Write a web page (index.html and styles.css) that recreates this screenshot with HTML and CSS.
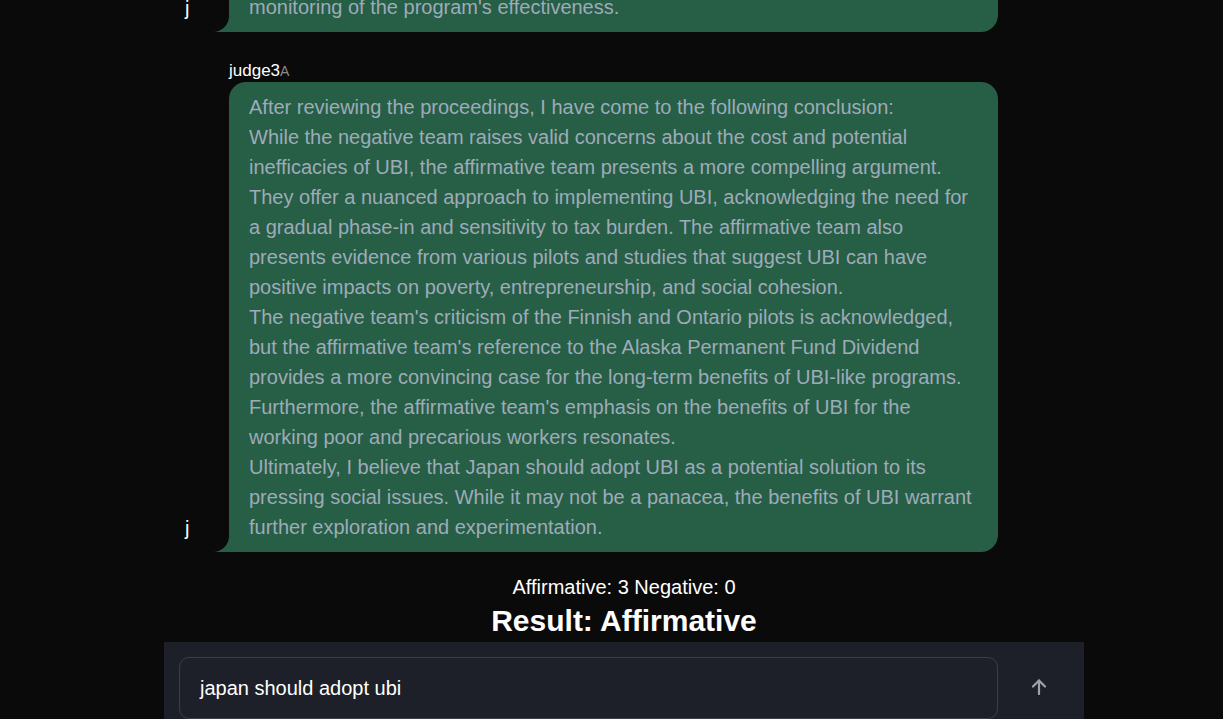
FILE: index.html
```html
<!DOCTYPE html>
<html>
<head>
<meta charset="utf-8">
<link rel="stylesheet" href="styles.css">
</head>
<body>
<div class="app">
  <div class="chat">
    <div class="msg">
      <div class="avatar">j</div>
      <div class="body">
        <div class="name">judge2<span class="tag">A</span></div>
        <div class="bubble">Overall, the affirmative team's arguments are more persuasive, and I believe that Japan should adopt a carefully designed UBI with a gradual rollout, clear funding mechanisms and continuous<br>monitoring of the program's effectiveness.</div>
      </div>
    </div>
    <div class="msg">
      <div class="avatar">j</div>
      <div class="body">
        <div class="name">judge3<span class="tag">A</span></div>
        <div class="bubble">After reviewing the proceedings, I have come to the following conclusion:<br>While the negative team raises valid concerns about the cost and potential inefficacies of UBI, the affirmative team presents a more compelling argument. They offer a nuanced approach to implementing UBI, acknowledging the need for a gradual phase-in and sensitivity to tax burden. The affirmative team also presents evidence from various pilots and studies that suggest UBI can have positive impacts on poverty, entrepreneurship, and social cohesion.<br>The negative team's criticism of the Finnish and Ontario pilots is acknowledged, but the affirmative team's reference to the Alaska Permanent Fund Dividend provides a more convincing case for the long-term benefits of UBI-like programs. Furthermore, the affirmative team's emphasis on the benefits of UBI for the working poor and precarious workers resonates.<br>Ultimately, I believe that Japan should adopt UBI as a potential solution to its pressing social issues. While it may not be a panacea, the benefits of UBI warrant further exploration and experimentation.</div>
      </div>
    </div>
    <div class="result">
      <div class="score">Affirmative: 3 Negative: 0</div>
      <h2 class="verdict">Result: Affirmative</h2>
    </div>
  </div>
  <div class="composer">
    <div class="input">japan should adopt ubi</div>
    <div class="send">
      <svg width="16" height="16" viewBox="0 0 16 16" fill="none" stroke="#9ca3af" stroke-width="2.2" stroke-linecap="round" stroke-linejoin="round"><path d="M8 15V1.5"/><path d="M2 7.5L8 1.5l6 6"/></svg>
    </div>
  </div>
</div>
</body>
</html>
```

FILE: styles.css
```css
html, body {
  margin: 0;
  height: 100%;
  background: #0a0a0a;
  font-family: "Liberation Sans", Arial, sans-serif;
  overflow: hidden;
}
body {
  padding-left: 25px;
  box-sizing: border-box;
}
.app {
  width: 920px;
  margin: 0 auto;
  height: 100vh;
  display: flex;
  flex-direction: column;
}
.chat {
  flex: 1;
  display: flex;
  flex-direction: column;
  justify-content: flex-end;
  overflow: hidden;
  padding: 0 86px 0 15px;
}
.msg {
  display: flex;
  align-items: flex-end;
  margin-top: 29px;
}
.avatar {
  width: 50px;
  flex: none;
  box-sizing: border-box;
  padding-left: 6px;
  padding-bottom: 13px;
  color: #ffffff;
  font-size: 20px;
  line-height: 22px;
}
.body {
  flex: 1;
  min-width: 0;
}
.name {
  color: #ffffff;
  font-size: 17px;
  line-height: 20px;
  margin-bottom: 1px;
}
.tag {
  color: #8a8a8a;
  font-size: 14px;
}
.bubble {
  position: relative;
  background: #275e46;
  color: #9eabb9;
  font-size: 20px;
  line-height: 30px;
  padding: 10px 20px;
  border-radius: 17px 17px 17px 0;
}
.bubble::before,
.bubble::after {
  content: "";
  position: absolute;
  left: -16px;
  bottom: 0;
  width: 16px;
  height: 16px;
}
.bubble::before { background: #275e46; }
.bubble::after {
  background: #0a0a0a;
  border-bottom-right-radius: 16px;
}
.result {
  text-align: center;
  color: #ffffff;
  margin: 23px -86px 0 -15px;
  padding-bottom: 3px;
}
.score {
  font-size: 20px;
  line-height: 24px;
}
.verdict {
  margin: 4px 0 0;
  font-size: 30px;
  line-height: 36px;
  font-weight: bold;
}
.composer {
  flex: none;
  background: #1d2028;
  display: flex;
  padding: 15px 0 0 15px;
  height: 62px;
}
.input {
  width: 819px;
  box-sizing: border-box;
  height: 62px;
  border: 1px solid #3a3e48;
  border-radius: 10px;
  padding: 0 20px;
  display: flex;
  align-items: center;
  color: #ffffff;
  font-size: 20px;
}
.send {
  flex: 1;
  display: flex;
  align-items: center;
  justify-content: center;
  height: 60px;
  padding-right: 4px;
}
```
